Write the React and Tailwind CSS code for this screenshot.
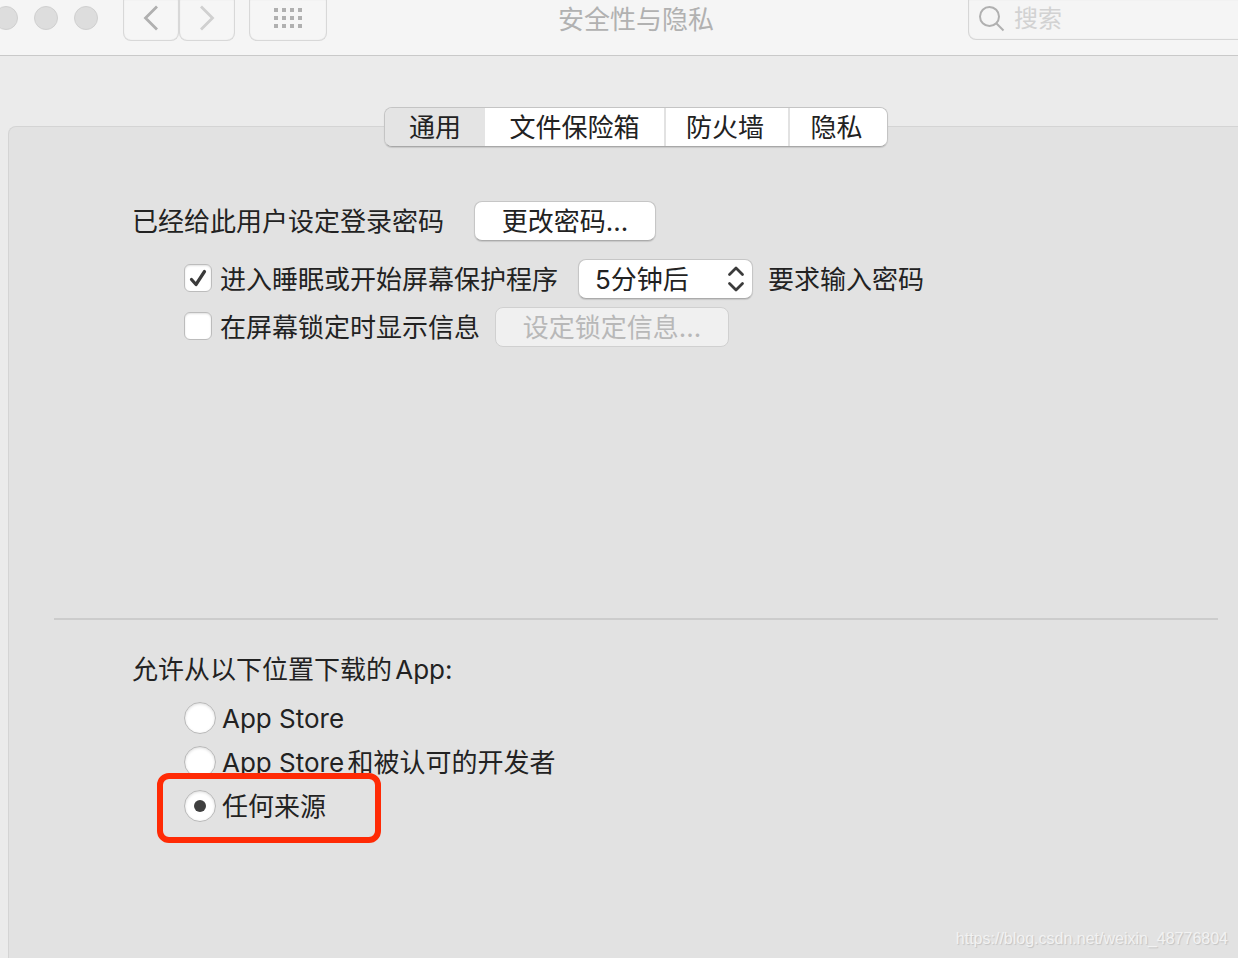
import { useState } from "react";

const tabs = [
  { name: "通用", size: "w-[100px]" },
  { name: "文件保险箱", size: "w-[179px]" },
  { name: "防火墙", size: "w-[124px] border-l-2 pr-1" },
  { name: "隐私", size: "w-[99px] border-l-2 pr-1" },
];

const sources = ["App Store", "App Store和被认可的开发者", "任何来源"];

const pushButton =
  "h-10 rounded-lg border border-[#c6c6c6] border-b-[#ababab] bg-white pt-0.5 text-center leading-9 shadow-[0_1px_1px_rgba(0,0,0,0.12)]";

const navButton =
  "flex h-[41px] items-center justify-center rounded-b-lg border border-t-0 border-[#d8d8d8] bg-[#f6f6f6] pb-1 shadow-[inset_0_0_1px_rgba(0,0,0,0.15)]";

function Toolbar() {
  return (
    <header className="grid h-14 grid-cols-[1fr_auto_1fr] items-start border-b border-[#c9c9c9] bg-[#f5f5f5]">
      <div className="flex items-start">
        <div className="-ml-[6px] flex gap-4 pt-[6px]">
          <button aria-label="关闭" className="size-6 rounded-full border border-[#d0d0d0] bg-[#dddddd]" />
          <button aria-label="最小化" className="size-6 rounded-full border border-[#d0d0d0] bg-[#dddddd]" />
          <button aria-label="缩放" className="size-6 rounded-full border border-[#d0d0d0] bg-[#dddddd]" />
        </div>
        <button aria-label="后退" className={`${navButton} ml-[25px] w-14`}>
          <svg width="16" height="26" viewBox="0 0 16 26" fill="none" stroke="#b0b0b0" strokeWidth="2.8">
            <path d="M14 1.500 2.500 13 14 24.500" />
          </svg>
        </button>
        <button aria-label="前进" className={`${navButton} w-14`} disabled>
          <svg width="16" height="26" viewBox="0 0 16 26" fill="none" stroke="#d0d0d0" strokeWidth="2.8">
            <path d="M2 1.500 13.500 13 2 24.500" />
          </svg>
        </button>
        <button aria-label="显示全部" className={`${navButton} ml-[14px] w-[78px]`}>
          <svg width="28" height="20" viewBox="0 0 28 20" fill="#b0b0b0">
            {[0, 8, 16].map((y) =>
              [0, 8, 16, 24].map((x) => <rect key={`${x}-${y}`} x={x} y={y} width="4" height="4" />)
            )}
          </svg>
        </button>
      </div>
      <h1 className="leading-10 text-[#b1b1b1]">安全性与隐私</h1>
      <label className="flex h-10 w-[304px] items-center justify-self-end rounded-b-lg border border-t-0 border-[#d6d6d6] pb-px pl-[9px] shadow-[inset_0_0_1px_rgba(0,0,0,0.15)]">
        <svg className="shrink-0" width="28" height="28" viewBox="0 0 28 28" fill="none" stroke="#b0b0b0" strokeWidth="2">
          <circle cx="11.500" cy="11.500" r="9.500" />
          <path d="m18.500 18.500 7 7" />
        </svg>
        <input
          type="search"
          aria-label="搜索"
          placeholder="搜索"
          className="ml-2 h-9 min-w-0 flex-1 bg-transparent text-[24px] leading-9 outline-none placeholder:text-[#d2d2d2]"
        />
      </label>
    </header>
  );
}

function CheckBox({ id, defaultChecked }) {
  return (
    <span className="relative mb-0.5 flex size-7 shrink-0">
      <input
        id={id}
        type="checkbox"
        defaultChecked={defaultChecked}
        className="peer size-7 appearance-none rounded-md border border-[#bcbcbc] bg-white shadow-[inset_0_1px_2px_rgba(0,0,0,0.12)]"
      />
      <svg
        className="pointer-events-none absolute inset-0 hidden peer-checked:block"
        width="28"
        height="28"
        viewBox="0 0 28 28"
        fill="none"
        stroke="#3b3b3b"
        strokeWidth="3.2"
        strokeLinecap="round"
        strokeLinejoin="round"
      >
        <path d="m7.500 15.500 4.500 5 8.500-13" />
      </svg>
    </span>
  );
}

export default function App() {
  const [active, setActive] = useState("通用");
  const [source, setSource] = useState("任何来源");

  return (
    <div className="relative overflow-hidden bg-[#ebebeb] font-[Inter,'Noto_Sans_CJK_SC',sans-serif] text-[26px] leading-[38px] text-[#222222] [text-autospace:normal]">
      <div className="-mr-[34px] flex min-h-screen flex-col">
        <Toolbar />
        <main className="flex flex-1 flex-col px-2 pt-[51px]">
          <nav className="relative z-10 flex h-10 self-center overflow-hidden rounded-lg border border-[#c4c4c4] border-b-[#a8a8a8] shadow-[0_1px_1px_rgba(0,0,0,0.12)]">
            {tabs.map((tab) => (
              <button
                key={tab.name}
                onClick={() => setActive(tab.name)}
                className={`${tab.size} border-[#e2e2e2] pt-0.5 leading-9 ${active === tab.name ? "bg-[#e4e4e4]" : "bg-white"}`}
              >
                {tab.name}
              </button>
            ))}
          </nav>

          <div className="-mt-[21px] flex-1 rounded-t-lg border border-b-0 border-[#d4d4d4] bg-[#e2e2e2]">
            <section className="flex min-h-[491px] flex-col pt-[74px] pl-[123px]">
              <div className="flex items-center">
                <p className="pt-0.5">已经给此用户设定登录密码</p>
                <button className={`${pushButton} ml-[30px] w-[182px]`}>更改密码...</button>
              </div>
              <div className="mt-[18px] flex items-center pl-[52px]">
                <CheckBox id="require-password" defaultChecked />
                <label htmlFor="require-password" className="ml-2 pt-0.5">进入睡眠或开始屏幕保护程序</label>
                <div className="relative ml-5">
                  <select
                    aria-label="要求输入密码的时间"
                    defaultValue="5"
                    className={`${pushButton} block w-[175px] appearance-none pl-4 text-left`}
                  >
                    <option value="0">立即</option>
                    <option value="5">5分钟后</option>
                    <option value="15">15分钟后</option>
                  </select>
                  <svg
                    className="pointer-events-none absolute top-[7px] right-2"
                    width="18"
                    height="26"
                    viewBox="0 0 18 26"
                    fill="none"
                    stroke="#3b3b3b"
                    strokeWidth="2.8"
                    strokeLinecap="round"
                    strokeLinejoin="round"
                  >
                    <path d="m2.500 8.500 6.500-6.500 6.500 6.500M2.500 17.500 9 24l6.500-6.500" />
                  </svg>
                </div>
                <span className="ml-[15px] pt-0.5">要求输入密码</span>
              </div>
              <div className="mt-2 flex items-center pl-[52px]">
                <CheckBox id="lock-message" />
                <label htmlFor="lock-message" className="ml-2 pt-0.5">在屏幕锁定时显示信息</label>
                <button
                  disabled
                  className="ml-[15px] h-10 w-[234px] rounded-lg border border-[#d0d0d0] bg-[#f0f0f0] pt-0.5 leading-9 text-[#b8b8b8]"
                >
                  设定锁定信息...
                </button>
              </div>
            </section>

            <hr className="mx-[45px] border-t-2 border-[#cccccc]" />

            <fieldset className="pt-[29px] pb-16 pl-[123px]">
              <legend className="contents">
                <span className="block pt-0.5">允许从以下位置下载的App:</span>
              </legend>
              <div className="mt-[7px] pl-[52px]">
                {sources.map((name, i) => (
                  <label key={name} className="relative flex h-11 w-fit items-center gap-[6px]">
                    <span className="relative flex size-8">
                      <input
                        type="radio"
                        name="source"
                        checked={source === name}
                        onChange={() => setSource(name)}
                        className="peer size-8 appearance-none rounded-full border border-[#b8b8b8] bg-white shadow-[inset_0_1px_3px_rgba(0,0,0,0.15)]"
                      />
                      <span className="pointer-events-none absolute inset-[10px] hidden rounded-full bg-[#3f3f3f] peer-checked:block" />
                    </span>
                    <span className="pt-0.5">{name}</span>
                    {i === 2 && (
                      <span className="pointer-events-none absolute -top-[11px] -left-[27px] h-[70px] w-[224px] rounded-xl border-[6px] border-[#ff2a05]" />
                    )}
                  </label>
                ))}
              </div>
            </fieldset>
          </div>
        </main>
      </div>
      <p className="absolute right-[10px] bottom-2 font-['Liberation_Sans',sans-serif] text-[16px] leading-[22px] text-[#f2f2f2] [text-shadow:1px_1px_1px_rgba(0,0,0,0.14)]">
        https://blog.csdn.net/weixin_48776804
      </p>
    </div>
  );
}
